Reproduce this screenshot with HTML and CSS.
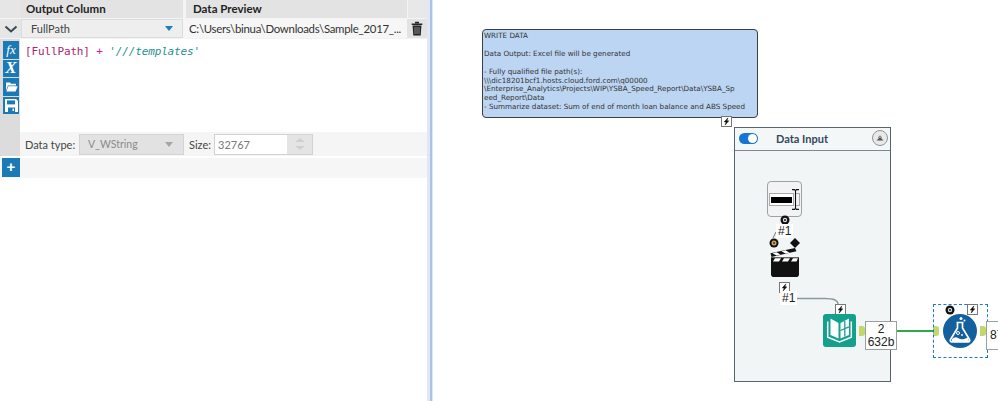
FILE: index.html
```html
<!DOCTYPE html>
<html lang="en">
<head>
<meta charset="utf-8">
<title>Formula tool</title>
<link rel="stylesheet" href="styles.css">
</head>
<body>
<div class="app">
  <section class="panel">
    <div class="head">
      <div class="h-gutter"></div>
      <div class="h-col h-out">Output Column</div>
      <div class="h-col h-prev">Data Preview</div>
      <div class="h-end"></div>
    </div>
    <div class="row">
      <div class="chev"><svg width="14" height="8" viewBox="0 0 14 8"><path d="M1.500 1.500 7 6.500l5.500-5" fill="none" stroke="#3c4650" stroke-width="2"/></svg></div>
      <div class="colsel"><span>FullPath</span><i class="tri"></i></div>
      <div class="preview">C:\Users\binua\Downloads\Sample_2017_...</div>
      <div class="trash"><svg width="12" height="15" viewBox="0 0 12 15"><path d="M4 1.500h4M.7 3.200h10.600" stroke="#222" stroke-width="1.600" fill="none"/><path d="M1.600 4.400h8.800l-.7 10H2.300z" fill="#222"/><path d="M4 6v7M6 6v7M8 6v7" stroke="#aaa" stroke-width=".8"/></svg></div>
    </div>
    <div class="editor">
      <div class="tools">
        <div class="tbtn"><span class="fx">fx</span></div>
        <div class="tbtn"><span class="xx">X</span></div>
        <div class="tbtn"><svg width="13" height="11" viewBox="0 0 13 11"><path d="M1 1.500h4l1 1.200h5V4.500H3L1 9.500z" fill="#fff"/><path d="M3.300 5.200H12.700L10.600 10.400H1.400z" fill="#fff"/></svg></div>
        <div class="tbtn"><svg width="13" height="13" viewBox="0 0 13 13"><path d="M0 0h11l2 2v11H0z" fill="#fff"/><path d="M2 1.400h8v4H2z" fill="#1b7ab5"/><path d="M3 8.500h7v4.500H3z" fill="#1b7ab5"/><path d="M7.500 9.500h1.500v2.500H7.500z" fill="#fff"/></svg></div>
      </div>
      <div class="code"><span class="c-field">[FullPath]</span> <span class="c-op">+</span> <span class="c-str">'///templates'</span></div>
    </div>
    <div class="foot">
      <div class="foot-gutter"></div>
      <span class="lbl lbl-type">Data type:</span>
      <div class="typesel"><span>V_WString</span><i class="tri tri-gray"></i></div>
      <span class="lbl lbl-size">Size:</span>
      <div class="sizebox"><span class="sizeval">32767</span><div class="spin"><i class="up"></i><i class="down"></i></div></div>
    </div>
    <div class="addrow"><div class="addbtn">+</div></div>
  </section>
  <div class="split"></div>
  <main class="canvas">
    <div class="note">WRITE DATA<br><br>Data Output: Excel file will be generated<br><br>- Fully qualified file path(s):<br>\\\dic18201bcf1.hosts.cloud.ford.com\q00000<br>\Enterprise_Analytics\Projects\WIP\YSBA_Speed_Report\Data\YSBA_Sp<br>eed_Report\Data<br>- Summarize dataset: Sum of end of month loan balance and ABS Speed</div>
    <div class="bolt b-note"><svg viewBox="0 0 10 10"><path d="M6.500 1 2.500 5.500h2.200L3.500 9l4-4.700H5.300z"/></svg></div>

    <div class="container">
      <div class="c-head">
        <div class="toggle"><i></i></div>
        <span class="c-title">Data Input</span>
        <div class="collapse"><svg width="10" height="6" viewBox="0 0 10 6"><path d="M1.500 5.500 5 2l3.500 3.500z" fill="#555"/><path d="M3 2.700 5 .8l2 1.900" fill="none" stroke="#555" stroke-width=".8"/></svg></div>
      </div>
    </div>

    <svg class="wires" width="565" height="401" viewBox="0 0 565 401">
      <path d="M340 238 L343 232" fill="none" stroke="#777"/>
      <path d="M364 298.500H392Q405 298.500 405 304" fill="none" stroke="#8a9a9a" stroke-width="1.300"/>
      <path d="M463 331H500" fill="none" stroke="#2fa84f" stroke-width="2"/>
    </svg>

    <div class="tool-text">
      <div class="t-inner"><i class="t-bar"></i></div>
      <i class="t-box"></i>
      <svg class="t-cursor" width="9" height="21" viewBox="0 0 9 21"><path d="M1 .6h2.500l1 1 1-1H8M4.500 1.600v17.800M1 20.400h2.500l1-1 1 1H8" fill="none" stroke="#111" stroke-width="1.100"/></svg>
    </div>
    <div class="target tg1"><svg viewBox="0 0 10 10"><circle cx="5" cy="5" r="4.500" fill="#111"/><circle cx="5" cy="5" r="2.200" fill="#ddd"/><circle cx="5" cy="5" r="1" fill="#111"/></svg></div>
    <div class="tag tag1">#1</div>

    <div class="target tg2"><svg viewBox="0 0 10 10"><circle cx="5" cy="5" r="4.500" fill="#111"/><circle cx="5" cy="5" r="2.500" fill="#e8a33d"/><circle cx="5" cy="5" r="1.200" fill="#24608f"/></svg></div>
    <svg class="diamond" width="10" height="10" viewBox="0 0 10 10"><path d="M5 0l5 5-5 5-5-5z" fill="#111"/></svg>
    <svg class="clap" width="30" height="29" viewBox="0 0 30 31" preserveAspectRatio="none">
      <path d="M1 15h28v13a3 3 0 0 1-3 3H4a3 3 0 0 1-3-3z" fill="#111"/>
      <path d="M1 10h28v5H1z" fill="#111"/>
      <path d="M3 14.500 5 11h6l-2 3.500zM12 14.500 14 11h6l-2 3.500zM21 14.500 23 11h5l-1.500 3.500z" fill="#fff"/>
      <path d="M.5 5.500 25 0l1.500 3.500L1.500 9.500z" fill="#111"/>
      <path d="M2.500 5.500l4 2.500 4-1-4-2.500zM11.500 3.500l4 2.500 4-1-4-2.500z" fill="#fff"/>
    </svg>
    <div class="bolt b-clap"><svg viewBox="0 0 10 10"><path d="M6.500 1 2.500 5.500h2.200L3.500 9l4-4.700H5.300z"/></svg></div>
    <div class="tag tag2">#1</div>
    <div class="bolt b-book"><svg viewBox="0 0 10 10"><path d="M6.500 1 2.500 5.500h2.200L3.500 9l4-4.700H5.300z"/></svg></div>

    <div class="book"><svg width="33" height="33" viewBox="0 0 33 33">
      <rect width="33" height="33" rx="3" fill="#13a08c"/>
      <path d="M4.700 7.500V23.300L16.500 28 28.300 23.300V7.500" fill="none" stroke="#fff" stroke-width="1.500"/>
      <path d="M7.500 4.500 15.500 9V24.500L7.500 21z" fill="#fff"/>
      <path d="M17.500 9 26 4.500V21L17.500 24.500z" fill="#fff"/>
      <path d="M21.800 7v15.500M17.500 16.500 26 12.800" stroke="#13a08c" stroke-width="1.300"/>
    </svg></div>
    <div class="anchor a1"></div>
    <div class="count"><span>2</span><span>632b</span></div>
    <div class="anchor a2"></div>

    <div class="selected"></div>
    <div class="target tg3"><svg viewBox="0 0 10 10"><circle cx="5" cy="5" r="4.500" fill="#111"/><circle cx="5" cy="5" r="2.200" fill="#ddd"/><circle cx="5" cy="5" r="1" fill="#111"/></svg></div>
    <div class="bolt b-flask"><svg viewBox="0 0 10 10"><path d="M6.500 1 2.500 5.500h2.200L3.500 9l4-4.700H5.300z"/></svg></div>
    <div class="flask"><svg width="34" height="34" viewBox="0 0 34 34">
      <circle cx="17" cy="17" r="17" fill="#14609f"/>
      <path d="M13.500 8.500h7M14.500 8.500v5.500L7.500 25.500a1.500 1.500 0 0 0 1.300 2.300H25.200a1.500 1.500 0 0 0 1.300-2.300L19.500 14V8.500" fill="none" stroke="#fff" stroke-width="1.700"/>
      <path d="M9 25q3-3 6-1t6 1 3.500-1.500L26 26.500 25 27.500H9z" fill="#fff"/>
      <circle cx="15" cy="19" r="1.500" fill="none" stroke="#fff"/><circle cx="19" cy="21" r=".9" fill="#fff"/>
      <circle cx="18" cy="4.500" r="1.500" fill="#fff"/><circle cx="21.500" cy="6.500" r="1" fill="#fff"/>
    </svg></div>
    <div class="anchor a3"></div>
    <div class="count count-cut"><span>87</span></div>
  </main>
</div>
</body>
</html>
```

FILE: styles.css
```css
* { box-sizing: border-box; }
html, body { margin: 0; padding: 0; }
body { width: 998px; height: 401px; overflow: hidden; background: #fff; font-family: "Lato", "Open Sans", sans-serif; color: #333; }
.app { display: flex; height: 401px; }

.panel { width: 427px; display: flex; flex-direction: column; flex: none; background: #fff; font-size: 11px; }
.head { display: flex; height: 19px; background: #f4f4f4; gap: 3px; padding-bottom: 1px; }
.h-gutter { width: 20px; background: #e6e6e6; margin-right: -3px; }
.h-col { background: #e3e3e3; font-weight: 700; font-size: 11.500px; line-height: 18px; color: #222; padding-left: 6px; white-space: nowrap; }
.h-out { width: 163px; }
.h-prev { width: 221px; padding-left: 7px; }
.h-end { flex: 1; background: #e8e8e8; margin-left: -2px; }

.row { display: flex; height: 20px; background: #f3f3f3; padding-bottom: 1px; }
.chev { width: 21px; flex: none; display: flex; align-items: center; justify-content: center; background: #e6e6e6; }
.colsel { width: 162px; flex: none; display: flex; align-items: center; justify-content: space-between; padding: 0 9px; background: #eeeeee; border: 1px solid #dcdcdc; font-size: 11px; color: #444; }
.tri { width: 0; height: 0; border: 4px solid transparent; border-top: 5px solid #1a7fbd; border-bottom: 0; }
.tri-gray { border-top-color: #a5a5a5; }
.preview { width: 224px; flex: none; padding-left: 6px; font-size: 11.400px; letter-spacing: -.27px; line-height: 20px; color: #333; white-space: nowrap; overflow: hidden; background: #f6f6f6; }
.trash { flex: 1; display: flex; align-items: center; justify-content: center; background: #e3e3e3; }

.editor { display: flex; height: 93px; }
.tools { width: 20px; flex: none; background: #dcdcdc; padding: 2px 1px 0 3px; display: flex; flex-direction: column; gap: 1px; }
.tbtn { width: 16px; height: 17.500px; background: #1b7ab5; display: flex; align-items: center; justify-content: center; color: #fff; }
.fx { font: italic 13px "Liberation Serif", serif; }
.xx { font: italic bold 17px/16px "Liberation Serif", serif; }
.code { padding: 3px 0 0 5px; font: 11px/20px "DejaVu Sans Mono", monospace; letter-spacing: -.14px; white-space: pre; }
.c-field { color: #a8246e; }
.c-op { color: #d81ba0; }
.c-str { color: #1f8f96; font-style: italic; }

.foot { display: flex; align-items: center; height: 26px; background: #f5f5f5; border-bottom: 2px solid #fff; font-size: 11px; color: #444; white-space: nowrap; }
.foot-gutter { width: 20px; flex: none; align-self: stretch; background: #dcdcdc; }
.lbl-type { margin-left: 5px; width: 54px; flex: none; }
.typesel { width: 105px; height: 21px; flex: none; display: flex; align-items: center; justify-content: space-between; padding: 0 10px 0 8px; background: #e2e2e2; border: 1px solid #d4d4d4; color: #8b8b8b; font-size: 10.500px; }
.lbl-size { margin-left: 5px; width: 25px; flex: none; }
.sizebox { width: 99px; height: 21px; flex: none; display: flex; background: #fff; border: 1px solid #d2d2d2; }
.sizeval { flex: 1; padding-left: 3px; line-height: 19px; color: #777; }
.spin { width: 25px; background: #e4e4e4; display: flex; flex-direction: column; align-items: center; justify-content: space-evenly; }
.spin i { width: 0; height: 0; border: 5px solid transparent; }
.spin .up { border-top: 0; border-bottom: 4px solid #cfcfcf; }
.spin .down { border-bottom: 0; border-top: 4px solid #cfcfcf; }

.addrow { height: 20px; background: #f6f6f6; padding-left: 2px; }
.addbtn { width: 18px; height: 19px; background: #1b7ab5; color: #fff; font: bold 15px/18px "Liberation Sans", sans-serif; text-align: center; }

.split { width: 6px; flex: none; background: linear-gradient(90deg, #e2e8f3 0 50%, #aac1e8 50% 85%, #dfe7f5 85%); }
.canvas { position: relative; flex: 1; background: #fff; overflow: hidden; }

.note { position: absolute; left: 49px; top: 29px; width: 276px; height: 89px; padding: 2px 1px; background: #bcd5f2; border: 1px solid #3a3f45; border-radius: 4px; font: 7.200px/8.900px "DejaVu Sans", sans-serif; color: #333; white-space: nowrap; overflow: hidden; }
.bolt { position: absolute; width: 11px; height: 11px; background: #fff; border: 1px solid #777; }
.bolt svg { display: block; width: 9px; height: 9px; }
.bolt path { fill: #111; stroke: #111; stroke-width: .6; }
.b-note { left: 288px; top: 116px; }

.container { position: absolute; left: 301px; top: 127px; width: 157px; height: 255px; background: #f1f5f6; border: 1px solid #56666b; }
.c-head { display: flex; align-items: center; height: 23px; padding: 0 2px 2px 4px; background: #f4f7f8; border-bottom: 1px solid #7b8a8f; }
.toggle { width: 19px; height: 11px; flex: none; border-radius: 6px; background: #1776d1; position: relative; }
.toggle i { position: absolute; right: 1px; top: 1px; width: 9px; height: 9px; border-radius: 50%; background: #fff; }
.c-title { flex: 1; text-align: center; font-size: 11px; font-weight: 700; color: #33475b; padding-right: 26px; white-space: nowrap; }
.collapse { width: 16px; height: 16px; flex: none; border-radius: 50%; border: 1px solid #8c9599; background: #e9e9e9; display: flex; align-items: center; justify-content: center; }

.wires { position: absolute; left: 0; top: 0; }

.tool-text { position: absolute; left: 334px; top: 181px; width: 35px; height: 36px; border: 1px solid #9ba3a5; border-radius: 4px; background: #f1f3f4; }
.t-inner { position: absolute; left: 1px; top: 11px; width: 25px; height: 13px; border: 1px solid #aaa; background: #fff; display: flex; align-items: center; justify-content: center; }
.t-bar { display: block; width: 21px; height: 6px; background: #000; }
.t-box { position: absolute; left: 27px; top: 11px; width: 5px; height: 13px; border: 1px solid #aaa; }
.t-cursor { position: absolute; left: 23px; top: 7px; }

.target { position: absolute; width: 10px; height: 10px; }
.target svg { display: block; width: 10px; height: 10px; }
.tg1 { left: 347px; top: 215px; }
.tg2 { left: 336px; top: 238px; }
.tg3 { left: 512px; top: 305px; }
.tag { position: absolute; background: #fff; font: 12px/14px "Liberation Sans", sans-serif; color: #222; padding: 0 2px; }
.tag1 { left: 343px; top: 224px; }
.tag2 { left: 347px; top: 291px; }
.diamond { position: absolute; left: 357px; top: 238px; }
.clap { position: absolute; left: 337px; top: 248px; }
.b-clap { left: 346px; top: 282px; }
.b-book { left: 402px; top: 304px; }
.b-flask { left: 534px; top: 304px; }

.book { position: absolute; left: 390px; top: 314px; width: 33px; height: 33px; }
.anchor { position: absolute; width: 6px; height: 10px; background: #c2d86b; border-radius: 0 3px 3px 0; }
.a1 { left: 426px; top: 326px; }
.a2 { left: 500px; top: 326px; }
.a3 { left: 547px; top: 326px; }
.count { position: absolute; left: 432px; top: 321px; width: 32px; height: 29px; background: #fff; border: 1px solid #9aa0a0; display: flex; flex-direction: column; align-items: center; font: 12px/13px "Liberation Sans", sans-serif; color: #222; padding-top: 1px; }
.count-cut { left: 553px; width: 20px; align-items: flex-start; padding: 7px 0 0 3px; }

.selected { position: absolute; left: 500px; top: 304px; width: 55px; height: 54px; border: 1px dashed #1c7ad0; }
.flask { position: absolute; left: 510px; top: 314px; }
```
